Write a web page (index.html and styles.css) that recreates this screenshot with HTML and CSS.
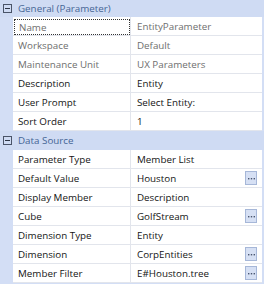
FILE: index.html
```html
<!DOCTYPE html>
<html>
<head>
<meta charset="utf-8">
<link rel="stylesheet" href="styles.css">
</head>
<body>
<div class="grid">
  <div class="cat cat-first"><span class="toggle"></span><span class="cat-label">General (Parameter)</span></div>
  <div class="row ro focus-row"><div class="name"><span class="focus">Name</span></div><div class="val">EntityParameter</div></div>
  <div class="row ro"><div class="name">Workspace</div><div class="val">Default</div></div>
  <div class="row ro"><div class="name">Maintenance Unit</div><div class="val">UX Parameters</div></div>
  <div class="row"><div class="name">Description</div><div class="val">Entity</div></div>
  <div class="row"><div class="name">User Prompt</div><div class="val">Select Entity:</div></div>
  <div class="row"><div class="name">Sort Order</div><div class="val">1</div></div>
  <div class="cat"><span class="toggle"></span><span class="cat-label">Data Source</span></div>
  <div class="row"><div class="name">Parameter Type</div><div class="val">Member List</div></div>
  <div class="row"><div class="name">Default Value</div><div class="val">Houston<span class="btn"><svg width="7" height="2" viewBox="0 0 7 2"><rect x="0" y="0" width="1.4" height="1.4"/><rect x="2.8" y="0" width="1.4" height="1.4"/><rect x="5.6" y="0" width="1.4" height="1.4"/></svg></span></div></div>
  <div class="row"><div class="name">Display Member</div><div class="val">Description</div></div>
  <div class="row"><div class="name">Cube</div><div class="val">GolfStream<span class="btn"><svg width="7" height="2" viewBox="0 0 7 2"><rect x="0" y="0" width="1.4" height="1.4"/><rect x="2.8" y="0" width="1.4" height="1.4"/><rect x="5.6" y="0" width="1.4" height="1.4"/></svg></span></div></div>
  <div class="row"><div class="name">Dimension Type</div><div class="val">Entity</div></div>
  <div class="row"><div class="name">Dimension</div><div class="val">CorpEntities<span class="btn"><svg width="7" height="2" viewBox="0 0 7 2"><rect x="0" y="0" width="1.4" height="1.4"/><rect x="2.8" y="0" width="1.4" height="1.4"/><rect x="5.6" y="0" width="1.4" height="1.4"/></svg></span></div></div>
  <div class="row"><div class="name">Member Filter</div><div class="val">E#Houston.tree<span class="btn"><svg width="7" height="2" viewBox="0 0 7 2"><rect x="0" y="0" width="1.4" height="1.4"/><rect x="2.8" y="0" width="1.4" height="1.4"/><rect x="5.6" y="0" width="1.4" height="1.4"/></svg></span></div></div>
</div>
</body>
</html>
```

FILE: styles.css
```css
html, body {
  margin: 0;
  padding: 0;
  background: #d3def5;
}
body {
  font-family: "Open Sans", "Noto Sans", sans-serif;
  font-size: 9.8px;
  color: #141414;
  width: 264px;
  height: 284px;
  overflow: hidden;
}
.grid {
  display: flex;
  flex-direction: column;
  background: #d3def5;
  height: 284px;
}
.cat {
  height: 19px;
  display: flex;
  align-items: center;
  background: #cfdbf3;
  color: #456595;
}
.cat-first {
  height: 17px;
}
.toggle {
  position: relative;
  width: 7px;
  height: 7px;
  border: 1px solid #4a5468;
  margin-left: 3px;
  margin-right: 6px;
  box-sizing: content-box;
}
.toggle::after {
  content: "";
  position: absolute;
  left: 1px;
  top: 3px;
  width: 5px;
  height: 1px;
  background: #2c3444;
}
.row {
  height: 18px;
  border-bottom: 1px solid #e2e5ec;
  margin-left: 13px;
  margin-right: 2px;
  background: #ffffff;
  display: flex;
}
.name {
  width: 118px;
  border-right: 1px solid #e2e5ec;
  display: flex;
  align-items: center;
  padding-left: 5px;
  box-sizing: border-box;
  white-space: nowrap;
  position: relative;
}
.val {
  flex: 1;
  display: flex;
  align-items: center;
  padding-left: 6px;
  padding-right: 5px;
  white-space: nowrap;
}
.ro .name, .ro .val {
  color: #6e6e6e;
}
.focus-row .name {
  padding-left: 0;
}
.focus {
  position: absolute;
  left: 1px;
  top: 2px;
  right: 0;
  bottom: 0;
  border: 1px dotted #333;
  display: flex;
  align-items: center;
  padding-left: 4px;
}
.btn {
  margin-left: auto;
  width: 10px;
  height: 12px;
  border: 1px solid #a6b7d8;
  background: #d6e0f4;
  display: flex;
  align-items: center;
  justify-content: center;
}
.btn svg {
  fill: #4a5670;
  display: block;
  margin-top: 2px;
}
```
